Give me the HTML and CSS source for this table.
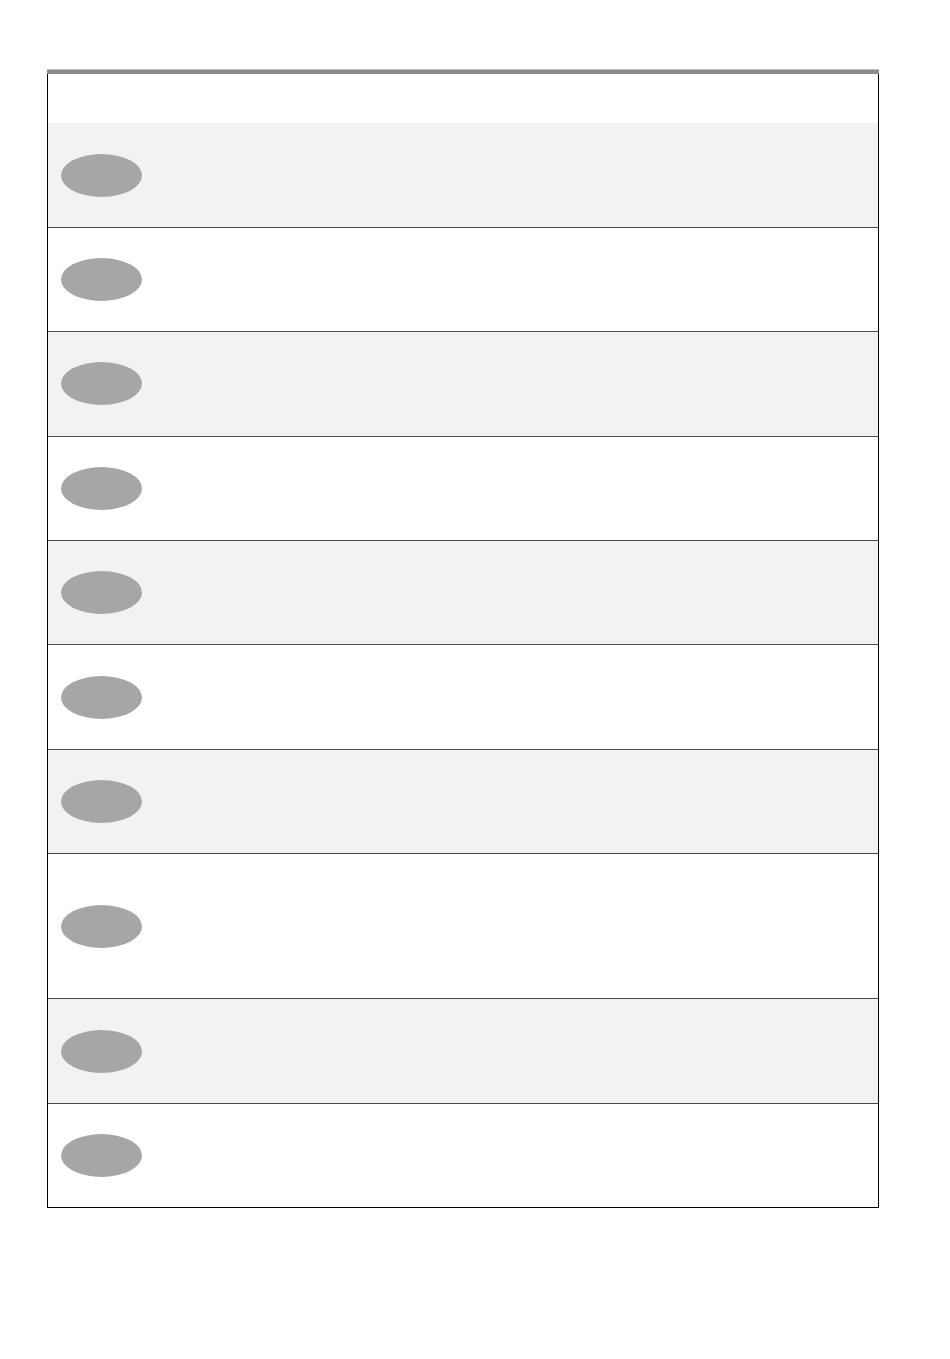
FILE: index.html
```html
<!DOCTYPE html>
<html>
<head>
<meta charset="utf-8">
<link rel="stylesheet" href="styles.css">
</head>
<body>
<div class="sheet">
  <div class="topbar"></div>
  <div class="table">
    <div class="head"></div>
    <div class="row alt"><div class="cell-icon"><span class="oval"></span></div><div class="cell-text"></div></div>
    <div class="row"><div class="cell-icon"><span class="oval"></span></div><div class="cell-text"></div></div>
    <div class="row alt"><div class="cell-icon"><span class="oval"></span></div><div class="cell-text"></div></div>
    <div class="row"><div class="cell-icon"><span class="oval"></span></div><div class="cell-text"></div></div>
    <div class="row alt"><div class="cell-icon"><span class="oval"></span></div><div class="cell-text"></div></div>
    <div class="row"><div class="cell-icon"><span class="oval"></span></div><div class="cell-text"></div></div>
    <div class="row alt"><div class="cell-icon"><span class="oval"></span></div><div class="cell-text"></div></div>
    <div class="row tall"><div class="cell-icon"><span class="oval"></span></div><div class="cell-text"></div></div>
    <div class="row alt"><div class="cell-icon"><span class="oval"></span></div><div class="cell-text"></div></div>
    <div class="row last"><div class="cell-icon"><span class="oval"></span></div><div class="cell-text"></div></div>
  </div>
</div>
</body>
</html>
```
FILE: styles.css
```css
html, body {
  margin: 0;
  padding: 0;
  background: #ffffff;
  font-family: "Liberation Sans", Arial, sans-serif;
}
.sheet {
  width: 832px;
  margin: 69px 0 0 47px;
}
.topbar {
  height: 4px;
  background: #8c8c8c;
  border-top: 1px solid #bdbdbd;
}
.table {
  border-left: 1px solid #000;
  border-right: 1px solid #000;
  border-bottom: 1px solid #000;
  display: flex;
  flex-direction: column;
}
.head {
  height: 49.3px;
  background: #fff;
}
.row {
  display: flex;
  height: 103.45px;
  border-bottom: 1px solid #4a4a4a;
  background: #fff;
}
.row.alt {
  background: #f2f2f2;
}
.row.tall {
  height: 144px;
}
.row.last {
  border-bottom: none;
}
.cell-icon {
  width: 107px;
  display: flex;
  align-items: center;
  justify-content: center;
}
.cell-text {
  flex: 1;
}
.oval {
  display: block;
  width: 81px;
  height: 43px;
  border-radius: 50%;
  background: #a6a6a6;
}
```
